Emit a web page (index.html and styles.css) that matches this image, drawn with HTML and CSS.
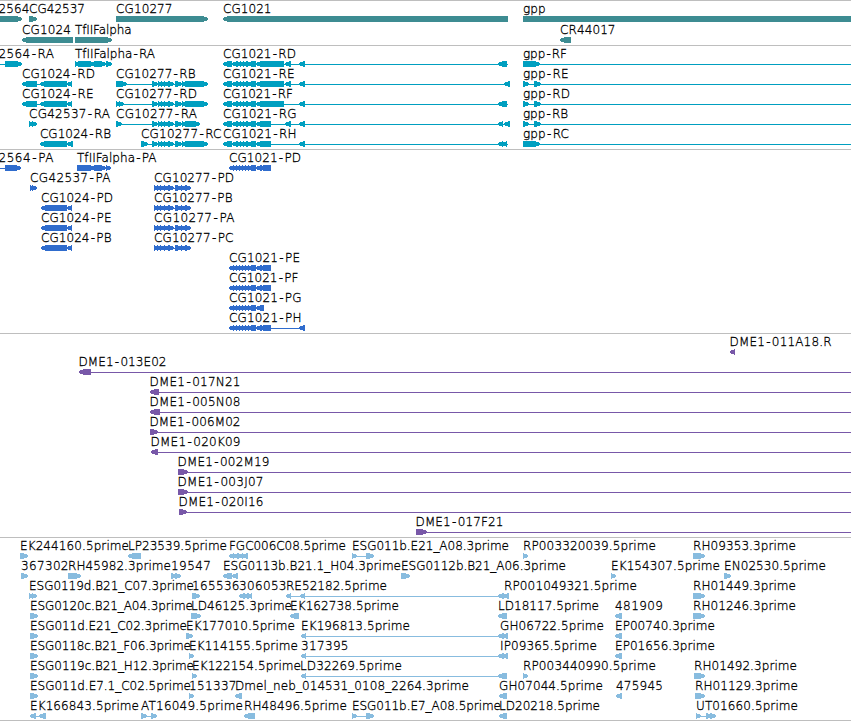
FILE: index.html
```html
<!DOCTYPE html>
<html lang="en">
<head>
<meta charset="utf-8">
<title>Genome tracks</title>
<link rel="stylesheet" href="styles.css">
</head>
<body>
<main class="browser">
  <section class="track track-gene" data-track="gene"></section>
  <section class="track track-transcript" data-track="transcript"></section>
  <section class="track track-protein" data-track="protein"></section>
  <section class="track track-bac" data-track="bac"></section>
  <section class="track track-est" data-track="est"></section>
</main>
<script src="tracks.js"></script>
</body>
</html>
```
FILE: styles.css
```css
body {
  margin: 0;
  background: #fff;
}
.browser {
  display: flex;
  flex-direction: column;
  width: 851px;
  height: 721px;
  overflow: hidden;
}
.track {
  box-sizing: border-box;
  flex: none;
  border-top: 1px solid #bebebe;
}
.row {
  display: block;
  width: 851px;
  height: 20px;
  overflow: visible;
}
.row text {
  font: 200 12px "DejaVu Sans", "DejaVu Sans Light", sans-serif;
  fill: #000;
  stroke: #000;
  stroke-width: 0.3px;
}
.row path {
  fill: currentColor;
  shape-rendering: crispEdges;
}
.track-gene { height: 45px; color: #3d8c92; }
.track-gene .row { height: 21px; }
.track-transcript { height: 104px; color: #009fc0; }
.track-protein { height: 184px; color: #2f6ccd; }
.track-bac { height: 204px; color: #7858a8; }
.track-est { height: 184px; color: #88bcdf; border-bottom: 1px solid #bebebe; }
```
FILE: tracks.js
```js
// Feature: [label x, label, label end, segments].
// Segments: ">a:b" forward block, "<a:b" reverse block, "=a:b" plain block, "-a:b" intron line.
const r1021 = "-223:508 <223:232 <232:238 <236:241 <239:244 <242:248 <247:256 ";
const r10277 = "-152:186 >152:158 >158:162 >161:165 >164:169 >168:174 >175:182 >182:186 ";
const p10277 = "-154:191 >154:158 >157:161 >160:165 >164:169 >168:174 >175:182 >181:186 >185:191";
const p1021 = "-229:260 <229:234 <232:237 <235:240 <238:243 <241:246 <244:249 <247:256 ";
const tracks = {
  gene: [
    [[-1.5, "2564", 29.5, ">-9:22"], [29, "CG42537", 85, ">29:37"], [116, "CG10277", 172.5, ">116:208"], [223, "CG1021", 271.5, "<223:508"], [523, "gpp", 545.5, "=523:851"]],
    [[22, "CG1024", 71, "<22:73"], [75, "TfIIFalpha", 131.5, ">75:112"], [560, "CR44017", 615.5, "<560:571"]]
  ],
  transcript: [
    [[-1.5, "2564-RA", 54, "-0:5 >5:22"], [75, "TfIIFalpha-RA", 155, "-75:112 >75:79 >78:95 >94:106 >106:112"], [223, "CG1021-RD", 296, r1021 + "<256:264 =260:284 <285:291 <299:305 <498:507"], [523, "gpp-RF", 567, ">523:540 -540:851"]],
    [[22, "CG1024-RD", 95, "-22:72 <22:37 <40:67 <67:72"], [116, "CG10277-RB", 195.5, "-116:152 >116:127 " + r10277 + ">185:208"], [223, "CG1021-RE", 294.5, r1021 + "<256:264 =260:284 <285:291 <299:305 -508:510 <504:510"], [523, "gpp-RE", 568.5, "-523:851 >523:529 >534:541"]],
    [[22, "CG1024-RE", 93.5, "-22:72 <22:37 <40:67 <67:72"], [116, "CG10277-RD", 197, "-116:152 >116:120 >119:124 " + r10277 + ">185:208"], [223, "CG1021-RF", 293, r1021 + "<256:264 =260:284 <299:305 <498:507"], [523, "gpp-RD", 570, "-523:851 >523:529 >534:541"]],
    [[29, "CG42537-RA", 110, ">29:33 >32:37"], [116, "CG10277-RA", 197, "-116:152 >116:122 " + r10277 + ">185:200"], [223, "CG1021-RG", 296.5, r1021 + "<256:264 =260:271 <285:291 <299:305 <498:503 -508:510 <504:510"], [523, "gpp-RB", 568, "-523:851 >523:529 >534:541"]],
    [[40, "CG1024-RB", 111, "<40:67 <67:73"], [141, "CG10277-RC", 221.5, "-141:152 >141:148 " + r10277 + ">185:208"], [223, "CG1021-RH", 296.5, r1021 + "<256:264 =260:271 <299:305 <498:503 <502:507"], [523, "gpp-RC", 569, ">523:540 -540:851"]]
  ],
  protein: [
    [[-1.5, "2564-PA", 53.5, "-0:5 >5:21"], [77, "TfIIFalpha-PA", 156.5, "-77:111 >77:95 >94:106 >106:111"], [229, "CG1021-PD", 301, p1021 + "<256:262 <259:271"]],
    [[30, "CG42537-PA", 110.5, ">30:33 >32:37"], [154, "CG10277-PD", 234, p10277]],
    [[41, "CG1024-PD", 113, "<41:67 <67:72"], [154, "CG10277-PB", 232.5, p10277]],
    [[41, "CG1024-PE", 111.5, "<41:67 <67:72"], [154, "CG10277-PA", 234.5, p10277]],
    [[41, "CG1024-PB", 111.5, "<41:67 <67:72"], [154, "CG10277-PC", 233.5, p10277]],
    [[229, "CG1021-PE", 300, p1021 + "<256:262 <259:271"]],
    [[229, "CG1021-PF", 298.5, p1021 + "<256:262 <259:271"]],
    [[229, "CG1021-PG", 301.5, p1021 + "<256:264"]],
    [[229, "CG1021-PH", 301.5, p1021 + "<256:262 <259:271 -271:300 <299:305"]]
  ],
  bac: [
    [[729.5, "DME1-011A18.R", 831.5, "<730:735"]],
    [[78.5, "DME1-013E02", 166.5, "<79:91 -91:851"]],
    [[149.5, "DME1-017N21", 240.5, "<150:159 -159:851"]],
    [[149.5, "DME1-005N08", 240.5, "<150:160 -160:851"]],
    [[149.5, "DME1-006M02", 240.5, ">150:158 -158:851"]],
    [[150.5, "DME1-020K09", 240.5, "<151:158 -158:851"]],
    [[177.5, "DME1-002M19", 269.5, ">178:188 -188:851"]],
    [[177.5, "DME1-003J07", 263.5, ">178:188 -188:851"]],
    [[178.5, "DME1-020I16", 263.5, ">179:187 -187:851"]],
    [[415.5, "DME1-017F21", 503.5, ">416:427 -427:851"]]
  ],
  est: [
    [[20, "EK244160.5prime", 129, ">20:28"], [128, "LP23539.5prime", 227, "<128:141"], [229, "FGC006C08.5prime", 346, "<229:234 <233:239 <238:243 <242:248"], [352, "ESG011b.E21_A08.3prime", 509, ">352:357 -357:366 >366:374"], [523, "RP003320039.5prime", 656, ">523:528"], [693, "RH09353.3prime", 796, ">693:705"]],
    [[21, "367302", 68.5, ">21:28"], [68, "RH45982.3prime", 171, ">68:81"], [171, "19547", 211, ">171:177 >175:181"], [223, "ESG0113b.B21.1_H04.3prime", 401, "<223:232 <232:238"], [401, "ESG0112b.B21_A06.3prime", 566, ">401:410"], [611, "EK154307.5prime", 720, ">611:616"], [724, "EN02530.5prime", 826, ">724:731"]],
    [[29, "ESG0119d.B21_C07.3prime", 194, ">29:33 >32:37"], [192, "165536", 239.5, ">192:200"], [239, "306053", 286.5, "<239:245 <243:249 <247:252"], [286, "RE52182.5prime", 387, "<286:291 -291:498 <300:305 <498:504 <503:509"], [504, "RP001049321.5prime", 637, ""], [693, "RH01449.3prime", 796, ">693:705"]],
    [[30, "ESG0120c.B21_A04.3prime", 193, ">30:38"], [191, "LD46125.3prime", 292, ">191:201"], [290, "EK162738.5prime", 399, "<290:299"], [498, "LD18117.5prime", 599, "<498:507"], [615, "481909", 663, "<615:622"], [693, "RH01246.3prime", 796, ">693:705"]],
    [[30, "ESG011d.E21_C02.3prime", 187, ">30:38"], [186, "EK177010.5prime", 295, ">186:193"], [301, "EK196813.5prime", 410, "<301:306 -306:498 <498:504 <502:508"], [500, "GH06722.5prime", 604, ""], [615, "EP00740.3prime", 715, "<615:622"]],
    [[30, "ESG0118c.B21_F06.3prime", 191, ">30:38"], [189, "EK114155.5prime", 298, ">189:194"], [301, "317395", 348.5, "<301:306 -306:498 <498:504 <502:508"], [500, "IP09365.5prime", 597, ""], [615, "EP01656.3prime", 715, "<615:622"]],
    [[30, "ESG0119c.B21_H12.3prime", 194, ">30:38"], [192, "EK122154.5prime", 301, ">192:197"], [300, "LD32269.5prime", 402, "<301:306 -306:498 <498:507"], [523, "RP003440990.5prime", 656, ">523:528"], [694, "RH01492.3prime", 797, ">694:705"]],
    [[30, "ESG011d.E7.1_C02.5prime", 191, ">30:38"], [189, "151337", 236.5, ">189:194"], [235, "Dmel_neb_014531_0108_2264.3prime", 469, "<235:242"], [499, "GH07044.5prime", 603, "<499:507"], [616, "475945", 663, "<616:622"], [695, "RH01129.3prime", 798, ">695:705"]],
    [[30, "EK166843.5prime", 139, "<30:36 -36:40 <39:46"], [141, "AT16049.5prime", 243, ">141:147 -147:152 >151:157"], [244, "RH48496.5prime", 347, "<244:255"], [352, "ESG011b.E7_A08.5prime", 501, ">352:357 -357:366 >366:374"], [499, "LD20218.5prime", 600, "<499:507"], [696, "UT01660.5prime", 798, ">696:701 -701:706 >706:712 >710:716"]]
  ]
};

const NS = "http://www.w3.org/2000/svg";

function segmentPath(seg) {
  const kind = seg[0];
  const [a, b] = seg.slice(1).split(":").map(Number);
  if (kind === "-") return `M${a} 18H${b}V19H${a}Z`;
  if (kind === "=") return `M${a} 15H${b}V21H${a}Z`;
  const head = Math.min(5, b - a);
  if (kind === "<") return `M${a} 17V19L${a + head} 21H${b}V15H${a + head}Z`;
  return `M${b} 17V19L${b - head} 21H${a}V15H${b - head}Z`;
}

// Hyphens carry extra room on both sides.
function labelOffsets(label) {
  return [...label].map((c, i) => (c === "-" || label[i - 1] === "-" ? 1.2 : 0)).join(" ");
}

for (const section of document.querySelectorAll(".track")) {
  for (const row of tracks[section.dataset.track]) {
    const svg = document.createElementNS(NS, "svg");
    svg.setAttribute("class", "row");
    for (const [x, label, end, segments] of row) {
      for (const seg of segments.split(" ").filter(Boolean)) {
        const path = document.createElementNS(NS, "path");
        path.setAttribute("d", segmentPath(seg));
        svg.append(path);
      }
      const text = document.createElementNS(NS, "text");
      text.setAttribute("x", x);
      text.setAttribute("y", 12);
      if (label.includes("-")) text.setAttribute("dx", labelOffsets(label));
      text.setAttribute("textLength", end - x);
      text.textContent = label;
      svg.append(text);
    }
    section.append(svg);
  }
}
```
